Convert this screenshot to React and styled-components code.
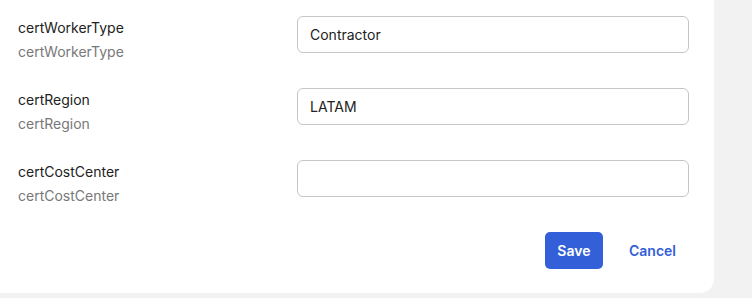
import React from 'react';
import styled, { createGlobalStyle } from 'styled-components';

const GlobalStyle = createGlobalStyle`
  body {
    margin: 0;
    background: #f2f2f2;
    font-family: Inter, "Noto Sans", sans-serif;
  }
`;

const Card = styled.form`
  width: 714px;
  box-sizing: border-box;
  padding: 16px 24px 24px 18px;
  background: #fff;
  border-radius: 0 0 14px 0;
  display: flex;
  flex-direction: column;
  gap: 24px;
`;

const Row = styled.div`
  display: grid;
  grid-template-columns: 279px 392px;
  align-items: start;
  height: 48px;
`;

const LabelBlock = styled.div`
  display: flex;
  flex-direction: column;
  font-size: 14px;
  line-height: 24px;
`;

const Label = styled.label`
  color: #222;
`;

const Hint = styled.span`
  color: #787878;
`;

const Input = styled.input`
  height: 37px;
  box-sizing: border-box;
  border: 1px solid #c6c6c6;
  border-radius: 6px;
  padding: 0 12px;
  font: inherit;
  font-size: 14px;
  color: #222;
  outline: none;
`;

const Actions = styled.div`
  display: flex;
  justify-content: flex-end;
  gap: 12px;
`;

const Button = styled.button`
  height: 37px;
  padding: 0 ${(p) => (p.primary ? '12.5px' : '14px')};
  border: none;
  border-radius: 5px;
  font-family: inherit;
  font-size: 14px;
  font-weight: 600;
  cursor: pointer;
  background: ${(p) => (p.primary ? '#3360d8' : 'transparent')};
  color: ${(p) => (p.primary ? '#fff' : '#3360d8')};
`;

const fields = [
  { name: 'certWorkerType', value: 'Contractor' },
  { name: 'certRegion', value: 'LATAM' },
  { name: 'certCostCenter', value: '' },
];

export default function App() {
  return (
    <>
      <GlobalStyle />
      <Card onSubmit={(e) => e.preventDefault()}>
        {fields.map((f) => (
          <Row key={f.name}>
            <LabelBlock>
              <Label htmlFor={f.name}>{f.name}</Label>
              <Hint>{f.name}</Hint>
            </LabelBlock>
            <Input id={f.name} defaultValue={f.value} />
          </Row>
        ))}
        <Actions>
          <Button primary type="submit">Save</Button>
          <Button type="button">Cancel</Button>
        </Actions>
      </Card>
    </>
  );
}
